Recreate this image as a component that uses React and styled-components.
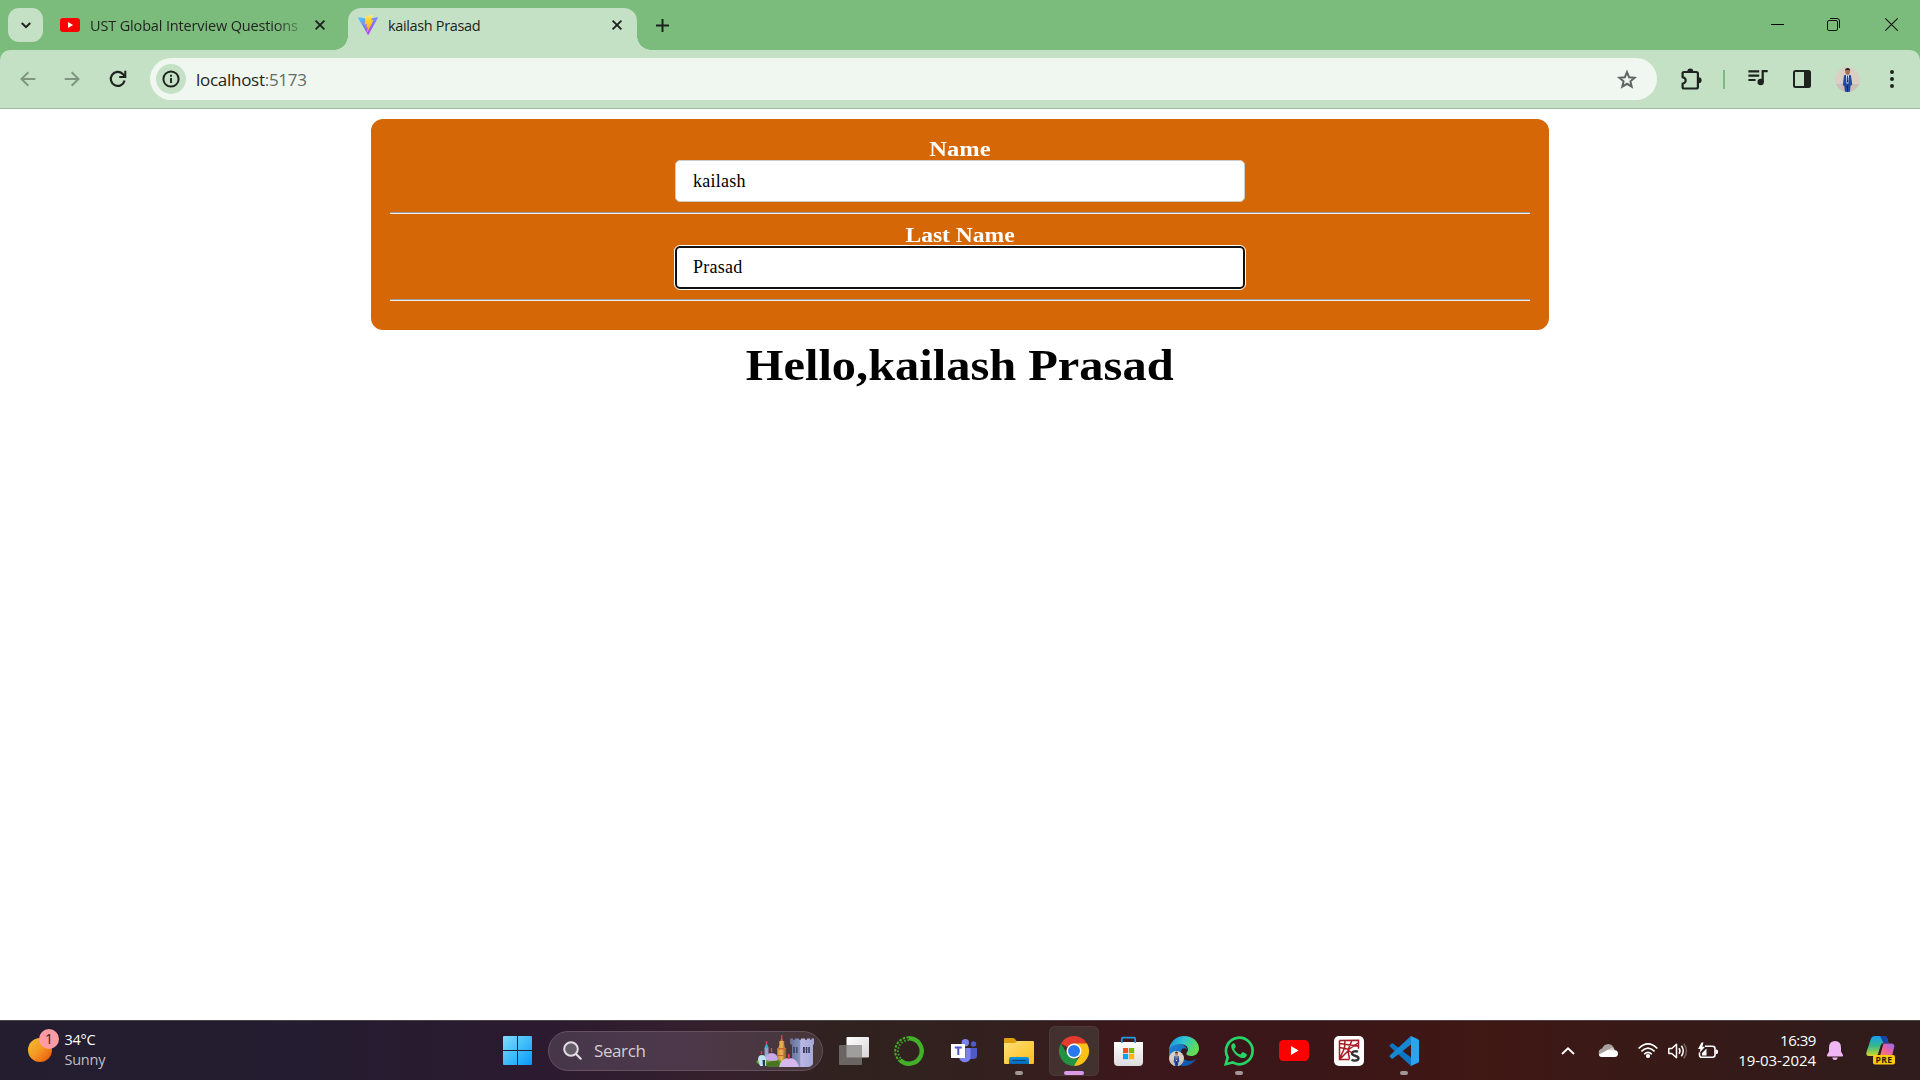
import React from "react";
import styled, { createGlobalStyle, css } from "styled-components";

const GlobalStyle = createGlobalStyle`
  * { box-sizing: border-box; }
  html, body { margin: 0; padding: 0; }
  body { background: #fff; overflow: hidden; }
  svg { display: block; flex: none; overflow: visible; }
`;

const ui = `"Open Sans", "Noto Sans", sans-serif`;
const serif = `"Liberation Serif", serif`;

const Screen = styled.div`
  width: 1920px;
  height: 1080px;
  display: flex;
  flex-direction: column;
  font-family: ${ui};
  color: #1f2320;
`;

/* ---------- browser tabs ---------- */

const TabStrip = styled.header`
  height: 50px;
  flex: none;
  display: flex;
  align-items: flex-end;
  background: #7bbb7b;
  padding-left: 8px;
`;

const TabSearch = styled.button`
  width: 35px;
  height: 34px;
  margin-bottom: 8px;
  border: 0;
  padding: 0;
  border-radius: 11px;
  background: #c5e1c5;
  display: flex;
  align-items: center;
  justify-content: center;
`;

const Tab = styled.div`
  height: 42px;
  display: flex;
  align-items: center;
  padding-bottom: 8px;
  width: ${(p) => (p.$active ? 289 : 305)}px;
  padding-left: ${(p) => (p.$active ? 10 : 17)}px;
  padding-right: ${(p) => (p.$active ? 15 : 23)}px;
  ${(p) =>
    p.$active &&
    css`
      position: relative;
      background: #c5e1c5;
      border-radius: 13px 13px 0 0;
      &::before,
      &::after {
        content: "";
        position: absolute;
        bottom: 0;
        width: 14px;
        height: 14px;
      }
      &::before {
        left: -14px;
        background: radial-gradient(circle at 0 0, transparent 13.5px, #c5e1c5 14px);
      }
      &::after {
        right: -14px;
        background: radial-gradient(circle at 100% 0, transparent 13.5px, #c5e1c5 14px);
      }
    `}
`;

const TabTitle = styled.span`
  flex: 1;
  margin-left: 10px;
  padding-top: 2px;
  font-size: 14.5px;
  line-height: 20px;
  white-space: nowrap;
  overflow: hidden;
  letter-spacing: ${(p) => p.$spacing}px;
  ${(p) =>
    p.$fade &&
    css`
      margin-right: 16px;
      mask-image: linear-gradient(90deg, #000 185px, rgba(0, 0, 0, 0.25) 210px);
    `}
`;

const NewTab = styled.div`
  width: 50px;
  height: 50px;
  display: flex;
  align-items: center;
  justify-content: center;
`;

const WindowControls = styled.div`
  height: 48px;
  align-self: flex-start;
  margin-left: auto;
  display: flex;
`;

const WindowButton = styled.div`
  width: 57px;
  display: flex;
  align-items: center;
  justify-content: center;
`;

/* ---------- browser toolbar ---------- */

const ToolbarBack = styled.div`
  height: 59px;
  flex: none;
  background: #7bbb7b;
`;

const Toolbar = styled.nav`
  height: 59px;
  display: flex;
  align-items: center;
  background: #c5e1c5;
  border-bottom: 1px solid #a1b8a1;
  border-radius: 10px 10px 0 0;
  padding: 0 6px;
`;

const ToolButton = styled.div`
  width: 44px;
  height: 44px;
  display: flex;
  align-items: center;
  justify-content: center;
  margin-left: ${(p) => p.$before || 0}px;
`;

const AddressBar = styled.div`
  flex: 1;
  height: 42px;
  margin: 0 12px 0 10px;
  padding: 0 20px 0 6px;
  display: flex;
  align-items: center;
  border-radius: 21px;
  background: #f0f7f0;
`;

const SiteInfo = styled.div`
  width: 30px;
  height: 30px;
  border-radius: 50%;
  background: #c5e1c5;
  display: flex;
  align-items: center;
  justify-content: center;
`;

const Url = styled.span`
  flex: 1;
  margin-left: 10px;
  padding-top: 1px;
  font-size: 17px;
  line-height: 24px;
  letter-spacing: -0.28px;
  span { color: #646b65; }
`;

const ToolDivider = styled.i`
  width: 2px;
  height: 19px;
  margin: 0 11px 0 10px;
  background: #7bbb7b;
`;

/* ---------- page ---------- */

const Page = styled.main`
  flex: 1;
  display: flex;
  flex-direction: column;
  align-items: center;
  padding-top: 10px;
  background: #fff;
`;

const FormCard = styled.form`
  width: 1178px;
  height: 211px;
  padding: 19px;
  border-radius: 12px;
  background: #d56706;
  display: flex;
  flex-direction: column;
  align-items: center;
`;

const Label = styled.label`
  font: bold 21.6px/22px ${serif};
  color: #fff;
  transform: scaleX(${(p) => p.$stretch});
`;

const TextInput = styled.input`
  width: 570px;
  height: 42px;
  padding: 0 17px;
  border: 1px solid #ccc;
  border-radius: 5px;
  background: #fff;
  color: #000;
  font: 18px/20px ${serif};
  letter-spacing: 0.25px;
  ${(p) =>
    p.$focused &&
    css`
      height: 43px;
      outline: 1px solid #fff;
      border: 2px solid #101010;
      padding: 0 16px;
    `}
`;

const Rule = styled.hr`
  width: 1140px;
  height: 2px;
  margin: 10px 0;
  border: 0;
  border-top: 1px solid #9a9a9a;
  background: #eee;
`;

const Greeting = styled.h1`
  margin: 10px 0 0;
  font: bold 43.4px/50px ${serif};
  color: #000;
  transform: scaleX(1.116);
`;

/* ---------- taskbar ---------- */

const Taskbar = styled.footer`
  height: 60px;
  flex: none;
  display: flex;
  align-items: center;
  border-top: 1px solid #4b4447;
  color: #fff;
  background: linear-gradient(
    90deg,
    #231e2f 0,
    #241c30 300px,
    #2b1a30 530px,
    #35202c 720px,
    #30221f 850px,
    #33201f 1000px,
    #3c171c 1130px,
    #3a1618 1310px,
    #401814 1480px,
    #351a18 1700px,
    #2f1c1c 1920px
  );
`;

const Weather = styled.div`
  width: 503px;
  flex: none;
  padding-left: 28px;
  display: flex;
  align-items: center;
`;

const WeatherIcon = styled.div`
  position: relative;
  width: 24px;
  height: 24px;
  margin-bottom: 2px;
  border-radius: 50%;
  background: linear-gradient(135deg, #f1bd32 5%, #f59722 50%, #ec5c0d 90%);
`;

const WeatherBadge = styled.span`
  position: absolute;
  left: 11px;
  top: -9px;
  width: 20px;
  height: 20px;
  border-radius: 50%;
  background: #fd9ba5;
  color: #2c2027;
  font-size: 14px;
  line-height: 20px;
  text-align: center;
`;

const Lines = styled.div`
  display: flex;
  flex-direction: column;
  margin-bottom: 2px;
  font-size: 14.5px;
  line-height: 20px;
  letter-spacing: -0.25px;
  ${(p) =>
    p.$right
      ? css`
          text-align: right;
          font-size: 15px;
          letter-spacing: -0.45px;
          span:nth-child(2) { letter-spacing: -0.05px; }
        `
      : css`
          margin-left: 12.5px;
          span:nth-child(2) { color: #c2bfc5; }
        `}
`;

const StartButton = styled.div`
  width: 29px;
  height: 29px;
  flex: none;
`;

const SearchPill = styled.div`
  width: 275px;
  height: 40px;
  flex: none;
  margin-left: 16px;
  margin-right: 3px;
  padding: 0 8px 0 14px;
  display: flex;
  align-items: center;
  border-radius: 20px;
  border: 1px solid #66505f;
  background: linear-gradient(90deg, #46364a, #4d384b 45%, #463638);
`;

const SearchText = styled.span`
  flex: 1;
  margin-left: 12px;
  font-size: 17px;
  line-height: 24px;
  letter-spacing: -0.4px;
  color: #d5cdd4;
`;

const AppTile = styled.div`
  position: relative;
  width: 50px;
  height: 50px;
  flex: none;
  margin: 0 2.5px;
  display: flex;
  align-items: center;
  justify-content: center;
  border-radius: 6px;
  ${(p) =>
    p.$active &&
    css`
      background: #433130;
      box-shadow: inset 0 0 0 1px #4b3938;
    `}
`;

const Running = styled.i`
  position: absolute;
  bottom: 1px;
  left: 50%;
  width: ${(p) => (p.$wide ? 20 : 8)}px;
  height: 4px;
  transform: translateX(-50%);
  border-radius: 2px;
  background: ${(p) => (p.$wide ? "#d99ae6" : "#a29696")};
`;

const Tray = styled.div`
  margin-left: auto;
  padding-right: 24px;
  display: flex;
  align-items: center;
`;

const TrayItem = styled.div`
  margin-right: ${(p) => p.$gap || 0}px;
`;

/* ---------- icons ---------- */

const YouTube = ({ w, h }) => (
  <svg width={w} height={h} viewBox="0 0 30 21">
    <rect width="30" height="21" rx="4.5" fill="#f00" />
    <path d="M12 6v9l7.600-4.500z" fill="#fff" />
  </svg>
);

const Cross = () => (
  <svg width="10" height="10" viewBox="0 0 10 10">
    <path d="M.6.6l8.800 8.800M9.400.6L.6 9.400" stroke="#1f2320" strokeWidth="1.900" />
  </svg>
);

const Vite = () => (
  <svg width="20" height="20" viewBox="0 0 20 20">
    <defs>
      <linearGradient id="viteBody" x1="0" y1="0" x2=".6" y2="1">
        <stop stopColor="#41d1ff" />
        <stop offset="1" stopColor="#bd34fe" />
      </linearGradient>
      <linearGradient id="viteBolt" x1="0" y1="0" x2="0" y2="1">
        <stop stopColor="#ffea83" />
        <stop offset=".2" stopColor="#ffdd35" />
        <stop offset="1" stopColor="#ffa800" />
      </linearGradient>
    </defs>
    <path d="M19.900 2.900L10.600 19.500c-.2.400-.7.400-.9 0L.1 2.900c-.2-.4.100-.8.500-.7l9.400 1.600 9.300-1.600c.4-.1.800.3.600.7z" fill="url(#viteBody)" />
    <path d="M15 .2L7.800 1.500 7 9.300l2.400-.5-.8 3.400 1.700-.5-1.200 5.500L15 5.300l-2.400.5z" fill="url(#viteBolt)" stroke="url(#viteBolt)" strokeWidth=".6" strokeLinejoin="round" />
  </svg>
);

const Arrow = ({ flip }) => (
  <svg width="16" height="16" viewBox="0 0 16 16">
    <g transform={flip ? "translate(16 0) scale(-1 1)" : undefined} fill="none" stroke="#7e957f" strokeWidth="2">
      <path d="M15.300 8H2M8.300 1.200L1.500 8l6.800 6.800" />
    </g>
  </svg>
);

const Reload = () => (
  <svg width="18" height="18" viewBox="0 0 18 18" fill="none" stroke="#1f2320">
    <path d="M15.600 10.600A7 7 0 1 1 13.800 4l2 2" strokeWidth="2.200" />
    <path d="M16.300.8v6.100H10.200" strokeWidth="2" />
  </svg>
);

const Info = () => (
  <svg width="18" height="18" viewBox="0 0 18 18">
    <circle cx="9" cy="9" r="7.600" fill="none" stroke="#1f2320" strokeWidth="2" />
    <path d="M9 8v5M9 4.800v1.900" stroke="#1f2320" strokeWidth="1.900" />
  </svg>
);

const Star = () => (
  <svg width="20" height="19" viewBox="0 0 20 19">
    <path d="M10 2.200l2.100 5 5.500.5-4.200 3.600 1.300 5.400-4.700-2.900-4.700 2.900 1.300-5.400L2.400 7.700l5.500-.5z" fill="none" stroke="#5f6762" strokeWidth="2" />
  </svg>
);

const Puzzle = () => (
  <svg width="21" height="21" viewBox="0 0 21 21">
    <path d="M1.600 4.300q0-1.300 1.300-1.300h12.400q1.600 0 1.600 1.500V18q0 1.500-1.500 1.500H2.900q-1.300 0-1.300-1.300v-3.700a3.100 3.100 0 0 0 0-6.200z" fill="none" stroke="#1f2320" strokeWidth="2.200" strokeLinejoin="round" />
    <path d="M6.300 2.500a3 3 0 0 1 6 0zM17.600 8.300a3 3 0 0 1 0 6z" fill="#1f2320" />
  </svg>
);

const Media = () => (
  <svg width="20" height="18" viewBox="0 0 20 18">
    <path d="M.4 1.300h10.800M.4 5.700h10.800M.4 10h7.200M14.700 12V1.200h5" fill="none" stroke="#1f2320" strokeWidth="2.200" />
    <circle cx="12.700" cy="12" r="3.200" fill="#1f2320" />
  </svg>
);

const SidePanel = () => (
  <svg width="18" height="18" viewBox="0 0 18 18">
    <rect x="1" y="1" width="16" height="16" rx="1.500" fill="none" stroke="#1f2320" strokeWidth="2" />
    <path d="M11 1h6v16h-6z" fill="#1f2320" />
  </svg>
);

const Portrait = ({ size }) => (
  <svg width={size} height={size} viewBox="0 0 25 25">
    <defs>
      <clipPath id={`face${size}`}><circle cx="12.500" cy="12.500" r="12.500" /></clipPath>
    </defs>
    <g clipPath={`url(#face${size})`}>
      <rect width="25" height="25" fill="#d9cfc4" />
      <path d="M0 17h25v8H0z" fill="#cbc0b8" />
      <path d="M9 8.500q3.500-2 7 0l1.200 9-1.700 1.500-.5 6h-5l-.8-6-1.400-1z" fill="#2549a0" />
      <path d="M11 7.500h3l-.7 9h-1.700z" fill="#e9eef5" />
      <path d="M12.200 8.500h.8l.3 6-.7 1.500-.6-1.500z" fill="#222d57" />
      <path d="M11.700 18.500l.6 6.500h.6l.3-6.500z" fill="#14275c" />
      <ellipse cx="12.600" cy="4.700" rx="2.300" ry="3" fill="#a56f51" />
      <path d="M10 4.300q0-3.300 2.600-3.300t2.600 3.300l-1-1.300h-3.200z" fill="#2b211f" />
    </g>
  </svg>
);

const WinLogo = () => (
  <svg width="29" height="29" viewBox="0 0 29 29">
    <defs>
      <linearGradient id="win" gradientUnits="userSpaceOnUse" x1="0" y1="0" x2="29" y2="29">
        <stop stopColor="#80dcff" />
        <stop offset=".5" stopColor="#40bdfb" />
        <stop offset="1" stopColor="#0899f8" />
      </linearGradient>
    </defs>
    <path d="M1 0h13v14H0V1q0-1 1-1zM15 0h13q1 0 1 1v13H15zM0 15h14v14H1q-1 0-1-1zM15 15h14v13q0 1-1 1H15z" fill="url(#win)" />
  </svg>
);

const Magnifier = () => (
  <svg width="19" height="19" viewBox="0 0 19 19" fill="none" stroke="#e2dde3" strokeLinecap="round">
    <circle cx="8" cy="8" r="6.800" strokeWidth="2" fill="#655c69" />
    <path d="M13 13l4.700 4.700" strokeWidth="2.200" />
  </svg>
);

const Castle = () => (
  <svg width="58" height="32" viewBox="0 0 58 32">
    <defs>
      <linearGradient id="tower" x1="0" y1="0" x2="1" y2="0">
        <stop stopColor="#626f98" />
        <stop offset=".4" stopColor="#8792bf" />
        <stop offset=".45" stopColor="#b8b8e4" />
        <stop offset="1" stopColor="#a5a7d5" />
      </linearGradient>
      <linearGradient id="spire" x1="0" y1="0" x2="1" y2="0">
        <stop stopColor="#d18b3d" />
        <stop offset=".5" stopColor="#edb64f" />
        <stop offset="1" stopColor="#73512f" />
      </linearGradient>
    </defs>
    <path d="M34 3.500h3v1.300h2V3.500h4v1.300h2V3.500h4v1.300h2V3.500h3v1.300h1.500V3.500H58V9l-1 1v19q-1 2-4 3H36V10l-2-1.500z" fill="url(#tower)" />
    <path d="M37.300 12h1.400v6h-1.400zM40.300 12h1.200v6h-1.200zM47 12h1.800v6H47zM49.800 12h1.500v6h-1.500zM52.300 12h1.500v6h-1.500z" fill="#303654" />
    <path d="M21.300 28V13h1l1-3V6h5v4l1 3h1v15z" fill="url(#spire)" />
    <path d="M24.200 6l1.500-4 1.500 4zM22 13h8v1.500h-8zM22 20h8v1h-8z" fill="#c56a32" />
    <path d="M25.700 0v4" stroke="#e23d65" strokeWidth="1.300" />
    <path d="M8.500 24V13l2-4 2 4v11z" fill="#8ba6c7" />
    <path d="M8.500 13l2-5 2 5z" fill="#49a4cf" />
    <path d="M10.500 6v3M15.500 13v4M5.500 16v3" stroke="#df3d68" strokeWidth="1.500" />
    <path d="M0 27q2-3 5-3h17q4 1 4 7H12Q3 31 0 27z" fill="#689b2e" />
    <path d="M10 29q5-4 13-3l1 6H12z" fill="#4b7420" />
    <path d="M9.500 25q0-7 6-7t6.500 7q-6 2-12.500 0z" fill="#c6a9e5" />
    <path d="M2 25q0-5 4-5t4 5v6H4z" fill="#bde4ef" />
    <path d="M6.500 25h2.500v6H7z" fill="#26364c" />
    <path d="M23 32q2-9 10-9t10 9z" fill="#d5b9ed" />
    <path d="M32.800 19v5" stroke="#e43667" strokeWidth="2" />
  </svg>
);

const TaskView = () => (
  <svg width="30" height="28" viewBox="0 0 30 28">
    <defs>
      <linearGradient id="tv" x1="0" y1="0" x2="1" y2="1">
        <stop stopColor="#fff" />
        <stop offset="1" stopColor="#d8d5d5" />
      </linearGradient>
    </defs>
    <rect x="7.500" width="22.500" height="20.500" rx="1" fill="url(#tv)" />
    <rect y="8" width="23" height="20" rx="1" fill="#6a6463" />
    <path d="M7.500 8H23v12.500H7.500z" fill="#a09d9d" />
  </svg>
);

const GreenRing = () => (
  <svg width="30" height="30" viewBox="0 0 30 30" fill="none">
    <path d="M15 2.300A12.700 12.700 0 1 1 6.020 23.980" stroke="#43b02a" strokeWidth="4.400" />
    <path d="M15 1.200A13.800 13.800 0 0 0 5.240 24.760" stroke="#43b02a" strokeWidth="2" strokeDasharray="2.600 1.300" />
    <path d="M15 4A11 11 0 0 0 7.220 22.780" stroke="#3c9b28" strokeWidth="1.900" strokeDasharray="1.700 1.600" />
  </svg>
);

const Teams = () => (
  <svg width="26" height="24" viewBox="0 0 26 24">
    <circle cx="14.300" cy="3.800" r="3.700" fill="#7b83eb" />
    <circle cx="22.500" cy="5" r="2.700" fill="#5059c9" />
    <path d="M17 9h9v8q0 3-4 3h-5z" fill="#5059c9" />
    <path d="M8 9h11.500v9q0 5-5.500 5.300Q9.500 23 8 19z" fill="#7b83eb" />
    <path d="M8 9h6.500v10H8z" fill="#515bbb" />
    <rect y="5" width="14" height="14" fill="#fff" />
    <path d="M3.800 8.500h7M7.300 8.500V16" stroke="#5059c9" strokeWidth="2" />
  </svg>
);

const Explorer = () => (
  <svg width="30" height="26" viewBox="0 0 30 26">
    <defs>
      <linearGradient id="folder" x1="0" y1="0" x2="1" y2="1">
        <stop stopColor="#ffe07a" />
        <stop offset="1" stopColor="#ffbd18" />
      </linearGradient>
      <linearGradient id="dock" x1="0" y1="0" x2="0" y2="1">
        <stop stopColor="#1397e0" />
        <stop offset="1" stopColor="#0467b7" />
      </linearGradient>
    </defs>
    <path d="M0 1q0-1 1-1h8q1 0 2 1l2 2.500V10H0z" fill="#e0a00e" />
    <path d="M0 5h11l2-2h16q1 0 1 1v21q0 1-1 1H1q-1 0-1-1z" fill="url(#folder)" />
    <path d="M5 26v-5q0-2 2-2h16q2 0 2 2v5z" fill="url(#dock)" />
    <path d="M8.500 22.500h13" stroke="#08467f" strokeWidth="1.200" />
  </svg>
);

const Chrome = () => (
  <svg width="30" height="30" viewBox="0 0 30 30">
    <path d="M15 15L2 7.500A15 15 0 0 1 28 7.500z" fill="#e33b2e" />
    <path d="M2 7.500L8.500 18.800 15 22.500h6L15 30A15 15 0 0 1 2 7.500z" fill="#229342" />
    <path d="M21.500 18.800L15 30A15 15 0 0 0 28 7.500H15z" fill="#fbc116" />
    <circle cx="15" cy="15" r="7.500" fill="#fff" />
    <circle cx="15" cy="15" r="6" fill="#2879ed" />
  </svg>
);

const Store = () => (
  <svg width="29" height="30" viewBox="0 0 29 30">
    <defs>
      <linearGradient id="bag" x1="0" y1="0" x2="0" y2="1">
        <stop stopColor="#fff" />
        <stop offset="1" stopColor="#dcdcdc" />
      </linearGradient>
    </defs>
    <path d="M0 6h29v20q0 4-4 4H4q-4 0-4-4z" fill="url(#bag)" />
    <path d="M7.800 7V3q0-1.300 1.200-1.300h11Q21.200 1.700 21.200 3v4" fill="none" stroke="#1e9ce8" strokeWidth="1.700" />
    <path d="M9 12h5.200v5.200H9z" fill="#f25022" />
    <path d="M15 12h5.200v5.200H15z" fill="#7fba00" />
    <path d="M9 18h5.200v5.200H9z" fill="#00a4ef" />
    <path d="M15 18h5.200v5.200H15z" fill="#ffb900" />
  </svg>
);

const EdgeWrap = styled.div`
  position: relative;
  width: 30px;
  height: 30px;
`;

const EdgeProfile = styled.div`
  position: absolute;
  left: 0;
  bottom: 0;
`;

const EdgeIcon = () => (
  <EdgeWrap>
    <svg width="30" height="30" viewBox="0 0 30 30">
      <defs>
        <linearGradient id="edgeTop" x1="0" y1="0" x2="1" y2=".4">
          <stop stopColor="#1888d8" />
          <stop offset=".5" stopColor="#2cc4d4" />
          <stop offset="1" stopColor="#62de50" />
        </linearGradient>
        <linearGradient id="edgeLow" x1="0" y1="0" x2="1" y2="1">
          <stop stopColor="#1d87d5" />
          <stop offset="1" stopColor="#0b4da0" />
        </linearGradient>
      </defs>
      <path d="M0 14A15 15 0 0 1 15 0c9 0 15 6 15 12.500 0 5-4 7.500-8 7.500-4.500 0-5.500-2-4-3.700 2.500-3.300 0-7.800-5-7.800C7 8.500 2 11 0 14z" fill="url(#edgeTop)" />
      <path d="M0 15C1 10 6 8 11 8.300c4 .3 7 3 7 5.500-1-1.500-3-2-4.500-1-4 3-1.500 12 7 12.200 3 0 5-1 7-2.500C25 27 20 30 15 30 6 30-1 24 0 15z" fill="url(#edgeLow)" />
    </svg>
    <EdgeProfile><Portrait size={15} /></EdgeProfile>
  </EdgeWrap>
);

const WhatsApp = () => (
  <svg width="30" height="30" viewBox="0 0 30 30">
    <path d="M1.800 28.200l1.900-6.800A13.300 13.300 0 1 1 8.600 26.400z" fill="none" stroke="#25d366" strokeWidth="2.700" />
    <path d="M10.800 8c-.4-.8-.8-.8-1.700-.7C7.500 8 6.800 10 7.500 12c1.500 4.500 5.500 8.700 10.500 10 2.500.5 4.500-1 4.800-2.800.1-.9 0-1.100-.6-1.400l-3-1.500c-.5-.2-.9-.1-1.200.3l-1.300 1.600c-.3.300-.6.300-1 .1-2.500-1-4.200-2.800-5.300-4.800-.2-.4-.1-.7.200-1l1-1.300c.2-.3.200-.6.100-.9z" fill="#25d366" />
  </svg>
);

const RedTile = styled.div`
  width: 30px;
  height: 30px;
  border-radius: 5px;
  background: #fdfdfd;
  display: flex;
  align-items: center;
  justify-content: center;
`;

const SpyderWeb = () => (
  <RedTile>
    <svg width="24" height="24" viewBox="0 0 24 24" fill="none">
      <path d="M2.500 1.500l19-.3v8.500M2.500 1.500v19h10M2.500 20.500L11 12M8 1l-.5 8-5 11M2.500 8.500l8 1.500M15 1.300l-4 9.700 4 3M21 4L11 11M2.500 4.500l7 1 12 1.500M11 12l1.500 8" stroke="#a51c27" strokeWidth="1.500" />
      <path d="M21 12.800c-2-1-6-.8-6 1.800s6.500 1.700 6.500 4.700c0 2.500-4.500 3-7 1.500" stroke="#343434" strokeWidth="2.400" />
    </svg>
  </RedTile>
);

const VSCode = () => (
  <svg width="30" height="30" viewBox="0 0 30 30">
    <path d="M22 30L1 10.800q-1-1 0-1.800l1.500-1.400q.7-.5 1.500 0L22 21.500z" fill="#0d76c4" />
    <path d="M22 0L1 19.200q-1 1 0 1.800l1.500 1.400q.7.500 1.500 0L22 8.500z" fill="#1688d4" />
    <path d="M22 0l7 3.300q1 .5 1 1.500v20.400q0 1-1 1.500L22 30z" fill="#2ba4ee" />
  </svg>
);

const Copilot = () => (
  <svg width="30" height="29" viewBox="0 0 30 29">
    <defs>
      <linearGradient id="coA" x1="0" y1="0" x2="0" y2="1">
        <stop stopColor="#159ff0" />
        <stop offset=".5" stopColor="#35b88b" />
        <stop offset="1" stopColor="#d5d928" />
      </linearGradient>
      <linearGradient id="coB" x1="1" y1="0" x2="0" y2="1">
        <stop stopColor="#8a6cf4" />
        <stop offset=".5" stopColor="#e761a8" />
        <stop offset="1" stopColor="#f9865f" />
      </linearGradient>
    </defs>
    <path d="M9 0h9q2.500 0 3.500 3l1 4h-5q-2 0-3 3l-2.500 8q-.8 2-3 2H3q-3.500 0-2.500-4L4.500 4Q5.500 0 9 0z" fill="url(#coA)" />
    <path d="M14 0h4q2.500 0 3.500 3l1 4h-5z" fill="#1743aa" />
    <path d="M17.500 7.500H25q4.500 0 3 4.500l-2 8H14z" fill="url(#coB)" />
    <rect x="7" y="19" width="22" height="9.500" rx="2" fill="#ffc90e" />
    <text x="18" y="26.600" textAnchor="middle" fontFamily={ui} fontWeight="700" fontSize="8.500" letterSpacing=".4" fill="#1e1a10">PRE</text>
  </svg>
);

const apps = [
  { id: "taskview", icon: <TaskView /> },
  { id: "ring", icon: <GreenRing /> },
  { id: "teams", icon: <Teams /> },
  { id: "files", icon: <Explorer />, running: true },
  { id: "chrome", icon: <Chrome />, running: true, active: true },
  { id: "store", icon: <Store /> },
  { id: "edge", icon: <EdgeIcon /> },
  { id: "whatsapp", icon: <WhatsApp />, running: true },
  { id: "youtube", icon: <YouTube w={30} h={21} /> },
  { id: "spyder", icon: <SpyderWeb /> },
  { id: "vscode", icon: <VSCode />, running: true },
];

export default function App() {
  return (
    <Screen>
      <GlobalStyle />
      <TabStrip>
        <TabSearch>
          <svg width="10" height="7" viewBox="0 0 10 7"><path d="M.8 1L5 5.200 9.200 1" fill="none" stroke="#1f2320" strokeWidth="2" /></svg>
        </TabSearch>
        <Tab>
          <YouTube w={20} h={14} />
          <TabTitle $fade $spacing={-0.15}>UST Global Interview Questions</TabTitle>
          <Cross />
        </Tab>
        <Tab $active>
          <Vite />
          <TabTitle $spacing={-0.35}>kailash Prasad</TabTitle>
          <Cross />
        </Tab>
        <NewTab>
          <svg width="13" height="13" viewBox="0 0 13 13"><path d="M6.500 0v13M0 6.500h13" stroke="#1f2320" strokeWidth="2" /></svg>
        </NewTab>
        <WindowControls>
          <WindowButton>
            <svg width="13" height="1"><path d="M0 0h13v1H0z" fill="#000" /></svg>
          </WindowButton>
          <WindowButton>
            <svg width="15" height="13" viewBox="0 0 15 13" fill="none" stroke="#111">
              <rect x=".5" y="2.500" width="10" height="10" rx="1.500" />
              <path d="M3 .5h7q2.500 0 2.500 2.500v7" />
            </svg>
          </WindowButton>
          <WindowButton>
            <svg width="13" height="13" viewBox="0 0 13 13"><path d="M.3.3l12.400 12.400M12.700.3L.3 12.700" stroke="#111" strokeWidth="1.100" /></svg>
          </WindowButton>
        </WindowControls>
      </TabStrip>

      <ToolbarBack>
        <Toolbar>
          <ToolButton><Arrow /></ToolButton>
          <ToolButton><Arrow flip /></ToolButton>
          <ToolButton $before={2}><Reload /></ToolButton>
          <AddressBar>
            <SiteInfo><Info /></SiteInfo>
            <Url>localhost<span>:5173</span></Url>
            <Star />
          </AddressBar>
          <ToolButton><Puzzle /></ToolButton>
          <ToolDivider />
          <ToolButton><Media /></ToolButton>
          <ToolButton><SidePanel /></ToolButton>
          <ToolButton $before={1}><Portrait size={25} /></ToolButton>
          <ToolButton $before={1}>
            <svg width="4" height="18" viewBox="0 0 4 18" fill="#1f2320">
              <circle cx="2" cy="2" r="2" /><circle cx="2" cy="9" r="2" /><circle cx="2" cy="16" r="2" />
            </svg>
          </ToolButton>
        </Toolbar>
      </ToolbarBack>

      <Page>
        <FormCard>
          <Label $stretch={1.135}>Name</Label>
          <TextInput defaultValue="kailash" />
          <Rule />
          <Label $stretch={1.09}>Last Name</Label>
          <TextInput $focused defaultValue="Prasad" />
          <Rule />
        </FormCard>
        <Greeting>Hello,kailash Prasad</Greeting>
      </Page>

      <Taskbar>
        <Weather>
          <WeatherIcon><WeatherBadge>1</WeatherBadge></WeatherIcon>
          <Lines><span>34°C</span><span>Sunny</span></Lines>
        </Weather>
        <StartButton><WinLogo /></StartButton>
        <SearchPill>
          <Magnifier />
          <SearchText>Search</SearchText>
          <Castle />
        </SearchPill>
        {apps.map((app) => (
          <AppTile key={app.id} $active={app.active}>
            {app.icon}
            {app.running && <Running $wide={app.active} />}
          </AppTile>
        ))}
        <Tray>
          <TrayItem $gap={23}>
            <svg width="14" height="8" viewBox="0 0 14 8"><path d="M1 7l6-5.800L13 7" fill="none" stroke="#fff" strokeWidth="1.900" /></svg>
          </TrayItem>
          <TrayItem $gap={20}>
            <svg width="20" height="13" viewBox="0 0 20 13">
              <path d="M4.500 13a4.300 4.300 0 0 1-.3-8.500A6.300 6.300 0 0 1 15.500 3l1 4z" fill="#a8a09f" />
              <path d="M4 13Q1.500 13 .8 10.500L9.500 6q3-1.500 6 .1Q20 6 20 9.600T16.500 13z" fill="#fff" />
              <path d="M10 6l4-2.500q2.500.5 3 3z" fill="#d2cccb" />
            </svg>
          </TrayItem>
          <TrayItem $gap={10}>
            <svg width="20" height="15" viewBox="0 0 20 15" fill="none" stroke="#fff" strokeWidth="1.600">
              <path d="M.6 5.500q9.400-9.300 18.800 0M3.400 8.400q6.600-6.500 13.200 0M6.200 11.200q3.800-3.700 7.600 0" />
              <circle cx="10" cy="13" r="1.300" fill="#fff" />
            </svg>
          </TrayItem>
          <TrayItem $gap={10}>
            <svg width="20" height="16" viewBox="0 0 20 16" fill="none" stroke="#fff" strokeWidth="1.500" strokeLinejoin="round">
              <path d="M.8 5.500h3L8.500 1.300v13.400L3.800 10.500h-3z" />
              <path d="M11 5.200q2 2.800 0 5.600M13.400 2.800q3.700 5.200 0 10.400" />
              <path d="M15.800.8q5.400 7.200 0 14.400" stroke="#77605e" />
            </svg>
          </TrayItem>
          <TrayItem $gap={20}>
            <svg width="20" height="16" viewBox="0 0 20 16">
              <path d="M7 3.300h7.500q2.500 0 2.500 2.500v6q0 2.500-2.500 2.500H4Q1.500 14.300 1.500 12V9.500" fill="none" stroke="#fff" strokeWidth="1.600" />
              <path d="M17.500 6.500h1q1.500 0 1.500 1.500v1.500q0 1.500-1.500 1.500h-1z" fill="#fff" />
              <path d="M4 12.500V10L8.500 5.500V12.500zM3.500-.5L0 6h2.500L1.500 10 7 3.800H4.300L5.500-.5z" fill="#fff" />
            </svg>
          </TrayItem>
          <TrayItem $gap={11}>
            <Lines $right><span>16:39</span><span>19-03-2024</span></Lines>
          </TrayItem>
          <TrayItem $gap={23}>
            <svg width="16" height="19" viewBox="0 0 16 19" fill="#efb6f3">
              <path d="M8 0q6 .3 6 6.500v4l2 3.500q.3 1.500-1 1.500H1Q-.3 15.500 0 14l2-3.500v-4Q2 .3 8 0zM5.300 16.500h5.400Q10.500 19 8 19t-2.700-2.500z" />
            </svg>
          </TrayItem>
          <TrayItem><Copilot /></TrayItem>
        </Tray>
      </Taskbar>
    </Screen>
  );
}
